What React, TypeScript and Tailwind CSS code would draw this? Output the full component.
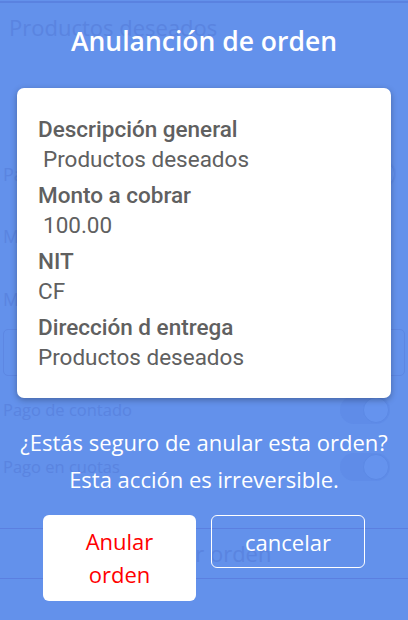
import React from "react";

const bgText = "text-[#5a84e0]";

function BgToggle() {
  return (
    <div className="w-[50px] h-[28px] rounded-full bg-[#5f8ce8] flex items-center justify-end pr-[1px]">
      <div className="w-[26px] h-[26px] rounded-full bg-[#6593ee] border border-[#5c89e5]" />
    </div>
  );
}

export default function App() {
  return (
    <div className="relative w-[408px] h-[620px] overflow-hidden bg-[#6391eb]" style={{ fontFamily: '"Open Sans", sans-serif' }}>
      {/* Background (dimmed) page */}
      <div className="flex flex-col w-full h-full">
        <div className="h-[2px] mt-[1px] bg-[#5a82e0]" />
        <div className={`pl-[9px] pt-[9px] text-[22px] leading-[30px] ${bgText}`}>Productos deseados</div>
        <div className="flex items-center justify-between pl-[3px] pr-[12px] mt-[117px] h-[30px]">
          <span className={`text-[18px] ${bgText}`}>Pa</span>
          <BgToggle />
        </div>
        <div className={`pl-[3px] mt-[32px] text-[18px] leading-[30px] ${bgText}`}>M</div>
        <div className={`pl-[3px] mt-[33px] text-[18px] leading-[30px] ${bgText}`}>M</div>
        <div className="mx-[3px] mt-[15px] h-[47px] rounded-[5px] border border-[#5d87e3]" />
        <div className="flex items-center justify-between pl-[3px] pr-[18px] mt-[20px] h-[28px]">
          <span className={`text-[16.5px] ${bgText}`}>Pago de contado</span>
          <BgToggle />
        </div>
        <div className="flex items-center justify-between pl-[3px] pr-[18px] mt-[28px] h-[30px]">
          <span className={`text-[16.5px] ${bgText}`}>Pago en cuotas</span>
          <BgToggle />
        </div>
        <div className="mt-[46px] h-[1px] bg-[#5b7fe0]" />
        <div className={`h-[49px] flex items-center justify-center text-[22px] ${bgText}`}>Anular orden</div>
        <div className="h-[1px] bg-[#5b7fe0]" />
      </div>

      {/* Modal overlay */}
      <div className="absolute inset-0 flex flex-col items-center">
        <div className="mt-[23px] text-white text-[26.5px] leading-[36px] font-semibold">Anulanción de orden</div>
        <div
          className="mt-[29px] w-[374px] bg-white rounded-[7px] shadow-[0_2px_6px_rgba(0,0,0,0.3)] pt-[27px] pb-[27px] pl-[21px] text-[#606060]"
          style={{ fontFamily: 'Roboto, "Liberation Sans", sans-serif' }}
        >
          <div className="text-[22.5px] leading-[28px] font-medium">Descripción general</div>
          <div className="mt-[2px] pl-[5px] text-[22.5px] leading-[28px]">Productos deseados</div>
          <div className="mt-[8px] text-[22.5px] leading-[28px] font-medium">Monto a cobrar</div>
          <div className="mt-[2px] pl-[5px] text-[22.5px] leading-[28px]">100.00</div>
          <div className="mt-[8px] text-[22.5px] leading-[28px] font-medium">NIT</div>
          <div className="mt-[2px] text-[22.5px] leading-[28px]">CF</div>
          <div className="mt-[8px] text-[22.5px] leading-[28px] font-medium">Dirección d entrega</div>
          <div className="mt-[2px] text-[22.5px] leading-[28px]">Productos deseados</div>
        </div>
        <div className="mt-[26px] text-white text-[22px] leading-[37px] text-center">
          <div>¿Estás seguro de anular esta orden?</div>
          <div>Esta acción es irreversible.</div>
        </div>
        <div className="mt-[17px] flex items-start justify-center gap-[15px]">
          <button className="w-[153px] h-[86px] bg-white rounded-[6px] text-[#ff0000] text-[22px] leading-[33px] flex items-center justify-center">
            <span className="max-w-[90px] text-center">Anular orden</span>
          </button>
          <button className="w-[154px] h-[53px] rounded-[6px] border border-white text-white text-[22px] leading-[32px] flex items-center justify-center">
            cancelar
          </button>
        </div>
      </div>
    </div>
  );
}
